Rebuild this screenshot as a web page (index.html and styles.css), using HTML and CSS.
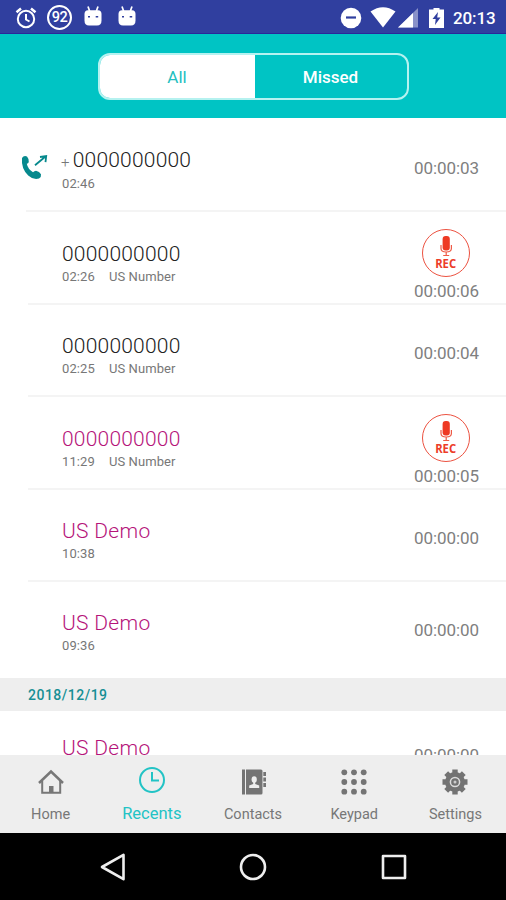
FILE: index.html
```html
<!DOCTYPE html>
<html lang="en">
<head>
<meta charset="utf-8">
<title>Recents</title>
<link rel="stylesheet" href="styles.css">
</head>
<body>
<svg class="defs" aria-hidden="true">
  <symbol id="bug" viewBox="0 0 18 20">
    <path d="M4 .5 5.600 5M14 .5 12.400 5" stroke="#fff" stroke-width="1.700"/>
    <path d="M.5 8Q.5 4.200 4 4.200h10q3.500 0 3.500 3.800v6.500q0 5-4.500 5H5q-4.500 0-4.500-5z" fill="#fff"/>
    <path d="M4 10.700h2M11.700 10.700h2.500" stroke="#303f9f" stroke-width="1.500"/>
  </symbol>
  <symbol id="mic" viewBox="0 0 18 21">
    <rect x="5.600" y="0" width="7.200" height="14.500" rx="3" fill="#ee3a24"/>
    <path d="M4 9v3.500q0 3.500 5.200 3.500t5.200-3.500V9M9.200 16v3M6.200 19.500h6" fill="none" stroke="#ee5a46" stroke-width="1.200"/>
  </symbol>
</svg>
<div class="screen">
  <div class="status">
    <svg class="s-alarm" viewBox="0 0 22 22" fill="none" stroke="#fff" stroke-width="2"><circle cx="11" cy="12" r="8.200"/><path d="M11 7v5.500l3.500 2"/><path d="M1.500 5.200l4.500-3.700M20.500 5.200 16 1.500" stroke-width="2.500"/></svg>
    <div class="s-count">92</div>
    <svg class="s-bug"><use href="#bug"/></svg>
    <svg class="s-bug"><use href="#bug"/></svg>
    <div class="spacer"></div>
    <svg class="s-dnd" viewBox="0 0 22 22"><circle cx="11" cy="11" r="10.300" fill="#fff"/><path d="M6 10.500h10" stroke="#303f9f" stroke-width="2.200"/></svg>
    <svg class="s-wifi" viewBox="0 0 26 21"><path d="M.5 4.500Q13-4 25.500 4.500L13 20.500z" fill="#fff"/></svg>
    <svg class="s-signal" viewBox="0 0 20 20"><path d="M20 0v19.500H0z" fill="#8991c9"/><path d="M15 5v14.500H0z" fill="#fff"/></svg>
    <svg class="s-battery" viewBox="0 0 15 20"><path d="M4.500 0h6v1.500H15V20H0V1.500h4.500z" fill="#fff"/><path d="M9 4 3.500 11h3.200L6 17l5.500-7.500H8.200z" fill="#303f9f"/></svg>
    <div class="clock">20:13</div>
  </div>
  <div class="header">
    <div class="segmented"><div class="seg on">All</div><div class="seg">Missed</div></div>
  </div>
  <div class="list">
    <div class="row">
      <svg class="outgoing" viewBox="0 0 28 26"><path d="M1 4Q2.800 1.200 6 2.500q2 2.200 1.800 5.500-.5 1.500-2 1.800Q7 15.500 12 18.200q1.300-1.500 3-1.500 3.500.8 5 3.500.5 2.800-2 4.300-6 1.500-10.800-3Q0 14.500 1 4z" fill="#06898d"/><path d="M14 11.200 24.500 2.500M19 3l6.200-.9-.7 6" fill="none" stroke="#06898d" stroke-width="1.800"/></svg>
      <div class="who"><div class="name"><span class="plus">+</span>0000000000</div><div class="meta"><span>02:46</span></div></div>
      <div class="side"><div class="dur">00:00:03</div></div>
    </div>
    <div class="row">
      <div class="who"><div class="name">0000000000</div><div class="meta"><span>02:26</span><span>US Number</span></div></div>
      <div class="side"><div class="rec"><svg><use href="#mic"/></svg><b>REC</b></div><div class="dur">00:00:06</div></div>
    </div>
    <div class="row up">
      <div class="who"><div class="name">0000000000</div><div class="meta"><span>02:25</span><span>US Number</span></div></div>
      <div class="side"><div class="dur">00:00:04</div></div>
    </div>
    <div class="row">
      <div class="who"><div class="name missed">0000000000</div><div class="meta"><span>11:29</span><span>US Number</span></div></div>
      <div class="side"><div class="rec"><svg><use href="#mic"/></svg><b>REC</b></div><div class="dur">00:00:05</div></div>
    </div>
    <div class="row up">
      <div class="who"><div class="name missed demo">US Demo</div><div class="meta"><span>10:38</span></div></div>
      <div class="side"><div class="dur">00:00:00</div></div>
    </div>
    <div class="row last">
      <div class="who"><div class="name missed demo">US Demo</div><div class="meta"><span>09:36</span></div></div>
      <div class="side"><div class="dur">00:00:00</div></div>
    </div>
    <div class="date">2018/12/19</div>
    <div class="row clipped">
      <div class="who"><div class="name missed demo">US Demo</div></div>
      <div class="side"><div class="dur">00:00:00</div></div>
    </div>
  </div>
  <div class="tabs">
    <div class="tab"><svg viewBox="0 0 26 26" fill="none" stroke="#777" stroke-width="2"><path d="M1 14 13 2.500 25 14" stroke-width="2.500"/><path d="M4.200 12v11.800h18V12"/><path d="M11 17h4.500v6.500H11z" fill="#777" stroke="none"/></svg><span>Home</span></div>
    <div class="tab active"><svg viewBox="0 0 26 26" fill="none" stroke="#22c3c5" stroke-width="2"><circle cx="13" cy="13" r="12"/><path d="M13 5v8.500h7"/></svg><span>Recents</span></div>
    <div class="tab"><svg viewBox="0 0 26 26" fill="#747474"><path d="M2 .5h3v25H2zM6 .5h15q1.500 0 1.500 1.500v22q0 1.500-1.500 1.500H6zM23.300 3H26v4h-2.700zM23.300 8.500H26v4h-2.700zM23.300 14H26v4h-2.700z"/><g fill="#eee"><ellipse cx="14.200" cy="10.500" rx="2.600" ry="3.300"/><path d="M13.200 12h2v3l4 1.500V19h-10v-2.500l4-1.500z"/></g></svg><span>Contacts</span></div>
    <div class="tab"><svg viewBox="0 0 26 26" fill="#747474"><circle cx="3.300" cy="3.300" r="2.900"/><circle cx="13" cy="3.300" r="2.900"/><circle cx="22.700" cy="3.300" r="2.900"/><circle cx="3.300" cy="13" r="2.900"/><circle cx="13" cy="13" r="2.900"/><circle cx="22.700" cy="13" r="2.900"/><circle cx="3.300" cy="22.700" r="2.900"/><circle cx="13" cy="22.700" r="2.900"/><circle cx="22.700" cy="22.700" r="2.900"/></svg><span>Keypad</span></div>
    <div class="tab"><svg viewBox="0 0 26 26"><circle cx="13" cy="13" r="10" fill="#737373"/><path d="M13 .5v25M.5 13h25M4.200 4.200l17.600 17.600M21.800 4.200 4.200 21.800" stroke="#737373" stroke-width="5.400"/><circle cx="13" cy="13" r="4.600" fill="#737373" stroke="#dcdcdc" stroke-width="1.500"/><circle cx="13" cy="13" r="1.500" fill="#ccc"/></svg><span>Settings</span></div>
  </div>
  <div class="nav">
    <svg viewBox="0 0 28 28"><path d="M24.500 1.800v24.400L3 14z"/></svg>
    <svg viewBox="0 0 28 28"><circle cx="14" cy="14" r="12"/></svg>
    <svg viewBox="0 0 28 28"><rect x="3" y="3" width="22" height="22"/></svg>
  </div>
</div>
</body>
</html>
```
FILE: styles.css
```css
* { box-sizing: border-box; }
body { margin: 0; font-family: Roboto, "Liberation Sans", sans-serif; background: #fff; }
.defs { display: none; }
.screen { width: 506px; height: 900px; display: flex; flex-direction: column; overflow: hidden; }

.status { height: 34px; flex: none; background: #303f9f; border-bottom: 1px solid #2a259b; display: flex; align-items: center; padding: 2px 10px 0 15px; color: #fff; }
.s-alarm { width: 22px; height: 22px; }
.s-count { width: 25px; height: 25px; margin-left: 10px; border: 2px solid #fff; border-radius: 50%; font-size: 14.500px; font-weight: 500; line-height: 21px; display: flex; justify-content: center; letter-spacing: -0.5px; }
.s-bug { width: 18px; height: 20px; margin-left: 12px; margin-top: -3px; }
.s-bug + .s-bug { margin-left: 16px; }
.spacer { flex: 1; }
.s-dnd { width: 22px; height: 22px; }
.s-wifi { width: 26px; height: 21px; margin-left: 8px; }
.s-signal { width: 20px; height: 20px; margin-left: 2px; }
.s-battery { width: 15px; height: 20px; margin-left: 11px; }
.clock { font-size: 17px; font-weight: 500; margin-left: 9px; width: 43px; white-space: nowrap; letter-spacing: -0.1px; }

.header { height: 84px; flex: none; background: #00c4c4; display: flex; justify-content: center; padding-top: 19px; }
.segmented { width: 311px; height: 47px; display: flex; border: 2px solid #b5f2f0; border-radius: 12px; overflow: hidden; }
.seg { flex: 1; display: flex; align-items: center; justify-content: center; color: #fff; font-size: 17px; font-weight: 500; }
.seg.on { flex: none; width: 155px; background: #fff; color: #25bfc1; font-weight: 400; }

.list { height: 636.500px; flex: none; overflow: hidden; background: #fff; }
.row { height: 92.5px; margin-left: 28px; border-bottom: 2px solid #f4f4f4; display: flex; padding: 30px 27px 0 34px; }
.row:first-child { height: 94px; margin-left: 0; padding: 30px 27px 0 21px; border-image: linear-gradient(to right, #fff 28px, #f4f4f4 28px) 2; }
.row.up { padding-top: 29px; }
.row.last { border-bottom: 0; height: 96px; padding-top: 29px; }
.outgoing { width: 28px; height: 26px; margin-top: 6px; margin-right: 12px; }
.who { flex: 1; }
.name { height: 25px; line-height: 25px; font-size: 21px; font-weight: 300; color: #222; white-space: nowrap; letter-spacing: 0.2px; }
.plus { font-size: 15px; color: #777; margin-right: 3px; }
.missed { color: #b5147a; }
.demo { letter-spacing: 0.3px; }
.meta { display: flex; gap: 14px; font-size: 13px; line-height: 18px; color: #777; letter-spacing: 0.1px; padding-top: 1px; }
.row:first-child .meta { padding: 2px 0 0 1px; }
.side { width: 65px; display: flex; flex-direction: column; align-items: center; }
.dur { font-size: 17px; line-height: 20px; font-weight: 400; color: #808080; margin-top: 9px; letter-spacing: -0.1px; }
.row:first-child .dur { margin-top: 10px; }
.rec { width: 48px; height: 48px; margin: -13px 2px 0 0; border: 1.500px solid #ec5241; border-radius: 50%; display: flex; flex-direction: column; align-items: center; color: #ec3d29; }
.rec svg { width: 18px; height: 21px; margin-top: 6px; }
.rec b { font-family: "Open Sans", sans-serif; font-size: 12.500px; line-height: 14px; transform: scaleX(.9); }
.rec + .dur { margin-top: 4px; }
.date { height: 33px; background: #eee; padding-left: 28px; font-size: 14px; line-height: 34px; font-weight: 500; color: #178f94; letter-spacing: .5px; }
.row.clipped { padding-top: 25px; }
.row.clipped .dur { margin-top: 9px; }

.tabs { height: 78.500px; flex: none; background: #eee; display: flex; }
.tab { flex: 1; display: flex; flex-direction: column; align-items: center; padding-top: 14px; color: #777; font-size: 14.500px; }
.tab svg { width: 26px; height: 26px; }
.tab span { line-height: 20px; margin-top: 10px; }
.tab.active { color: #22c3c5; font-size: 16.500px; padding-top: 12px; }
.tab.active span { margin-top: 11px; }

.nav { height: 67px; flex: none; background: #000; display: flex; justify-content: center; align-items: center; gap: 112.500px; }
.nav svg { width: 28px; height: 28px; fill: none; stroke: #eee; stroke-width: 2.600; stroke-linejoin: round; }
```
